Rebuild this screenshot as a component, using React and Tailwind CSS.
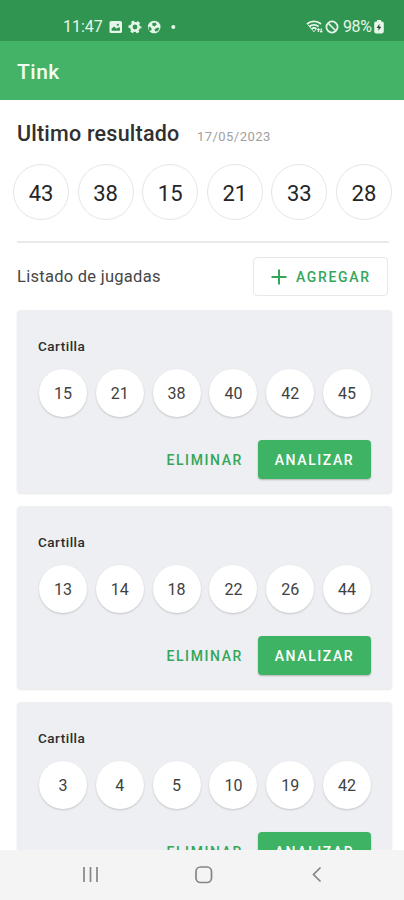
const RESULT = [43, 38, 15, 21, 33, 28];

const TICKETS = [
  { id: 1, numbers: [15, 21, 38, 40, 42, 45] },
  { id: 2, numbers: [13, 14, 18, 22, 26, 44] },
  { id: 3, numbers: [3, 4, 5, 10, 19, 42] },
];

// ─── Status bar ───────────────────────────────────────────────────
function NotificationIcons() {
  return (
    <svg className="ml-[6px]" width="68" height="14" viewBox="0 0 68 14" fill="currentColor">
      {/* picture */}
      <rect x=".5" y="1" width="12.5" height="12" rx="1.6" />
      <path d="M2.6 10.8V8.6L5.2 6.6L7.2 8.6L10.9 7V10.8Z" fill="#319552" />
      <circle cx="8.8" cy="4.8" r="1.1" fill="#319552" />
      {/* gear */}
      <circle cx="26" cy="7" r="3.7" fill="none" stroke="currentColor" strokeWidth="2.6" />
      <circle cx="26" cy="7" r="5.4" fill="none" stroke="currentColor" strokeWidth="2.2" strokeDasharray="2.8 2.855" strokeDashoffset="1.4" />
      {/* ball */}
      <circle cx="45.2" cy="7" r="6.3" />
      <path d="M43.2 3.2L46.4 2.4L47.8 4.6L45.6 6.4L43.4 5.6Z" fill="#319552" />
      <path d="M39.6 6.6L42 7.4L42.8 9.8L41 11.2L39.8 9.4Z" fill="#319552" />
      <path d="M46.4 8.4L49.2 7.4L50.4 8.6L48.6 11.2L46.6 11.4L45.4 10Z" fill="#319552" />
      <circle cx="64.3" cy="7" r="2" />
    </svg>
  );
}

function StatusBar() {
  return (
    <div className="h-[41px] shrink-0 bg-[#319552] text-[#e6f7e9] flex justify-between pt-[17px] pl-[63px] pr-[20px]">
      <div className="flex items-center h-5">
        <span className="w-[40px] text-[16px] leading-5">11:47</span>
        <NotificationIcons />
      </div>
      <div className="flex items-center h-5">
        <svg width="18" height="14" viewBox="0 0 18 14" fill="none" stroke="currentColor" strokeWidth="1.8">
          <path d="M1 4C5 .6 11 .6 15 4" />
          <path d="M3.4 6.5C6 4.3 10 4.3 12.6 6.5" />
          <path d="M5.6 8.9C7 7.7 9 7.7 10.4 8.9" />
          <path d="M1.8 4.6L8 11.8L10.2 9.1" strokeWidth=".9" />
          <path d="M12.4 12V8.6M15.2 8.4V12.2" strokeWidth="1.3" />
          <path d="M11 10L12.4 8.4L13.8 10M13.8 10.8L15.2 12.4L16.6 10.8" strokeWidth="1" />
        </svg>
        <svg className="ml-px" width="14" height="14" viewBox="0 0 14 14" fill="none" stroke="currentColor" strokeWidth="1.7">
          <circle cx="7" cy="7" r="5.6" />
          <path d="M3 3L11 11" />
        </svg>
        <span className="ml-[4px] w-[31px] text-[16px] leading-5 tracking-[-0.4px] whitespace-nowrap">98%</span>
        <svg width="10" height="14" viewBox="0 0 10 14">
          <path d="M3 0H7V1.6H8A1.8 1.8 0 0 1 9.8 3.4V11.6A1.8 1.8 0 0 1 8 13.4H2A1.8 1.8 0 0 1 .2 11.6V3.4A1.8 1.8 0 0 1 2 1.6H3Z" fill="currentColor" />
          <path d="M5.6 3.8L2.6 8H4.7L4.2 11L7.3 6.8H5.2Z" fill="#23442f" />
        </svg>
      </div>
    </div>
  );
}

// ─── Ticket card ──────────────────────────────────────────────────
function TicketCard({ numbers }) {
  return (
    <div className="h-[183px] shrink-0 rounded-[4px] bg-[#edeff2] shadow-[0_1px_2px_rgba(0,0,0,0.1)] pt-[26px] px-[21px]">
      <h3 className="text-[13.5px] leading-5 font-medium tracking-[0.5px] text-[#2b2c2e]">Cartilla</h3>
      <div className="mt-[13px] ml-[1px] flex justify-between">
        {numbers.map((n) => (
          <span
            key={n}
            className="w-12 h-12 rounded-full bg-white shadow-[0_1px_2px_rgba(0,0,0,0.18)] flex items-center justify-center pt-[2px] text-[16px] text-[#414141]"
          >
            {n}
          </span>
        ))}
      </div>
      <div className="mt-[23px] flex justify-end">
        <button className="h-[39px] pt-[2px] pr-[15px] text-[14px] font-medium tracking-[1.6px] text-[#34a65a]">ELIMINAR</button>
        <button className="w-[113px] h-[39px] pt-[2px] rounded-[4px] bg-[#3fb364] shadow-[0_1px_2px_rgba(0,0,0,0.25)] text-[14px] font-medium tracking-[1.6px] text-white">
          ANALIZAR
        </button>
      </div>
    </div>
  );
}

function NavBar() {
  return (
    <div className="h-[50px] shrink-0 bg-[#f4f4f4]">
      <svg width="404" height="50" viewBox="0 0 404 50" fill="none" stroke="#858585" strokeWidth="1.7">
        <path d="M84 17V32M90.5 17V32M97 17V32" />
        <rect x="196" y="17" width="15.5" height="15.5" rx="4.5" />
        <path d="M320.5 17.5L313.5 24.5L320.5 31.5" />
      </svg>
    </div>
  );
}

export default function App() {
  return (
    <div className="w-[404px] h-[900px] overflow-hidden flex flex-col bg-white font-[Roboto,sans-serif]">
      <StatusBar />
      <header className="h-[59px] shrink-0 bg-[#43b368] flex items-center pl-[17px] pt-[4px]">
        <h1 className="text-[21px] font-medium tracking-[0.5px] text-[#f3fff3]">Tink</h1>
      </header>

      <main className="flex-1 min-h-0 overflow-hidden flex flex-col">
        <div className="pt-[20px] pl-[17px] flex items-baseline">
          <h2 className="w-[180px] text-[21.5px] leading-7 font-medium tracking-[0.22px] text-[#303030] whitespace-nowrap">Ultimo resultado</h2>
          <span className="text-[13px] tracking-[0.45px] text-[#a0a0a0]">17/05/2023</span>
        </div>
        <div className="mt-[16px] pl-[13px] pr-[12px] flex justify-between">
          {RESULT.map((n) => (
            <span
              key={n}
              className="w-14 h-14 rounded-full border border-[#e5e5e5] flex items-center justify-center pt-[2px] text-[22px] text-[#252525]"
            >
              {n}
            </span>
          ))}
        </div>

        <div className="mt-[21px] ml-[17px] mr-[15px] h-[2px] shrink-0 bg-[#e9e9e9]" />

        <div className="mt-[14px] pl-[17px] pr-[16px] flex items-center justify-between">
          <span className="pt-px text-[16.5px] tracking-[0.27px] text-[#464646]">Listado de jugadas</span>
          <button className="w-[135px] h-[39px] rounded-[4px] border-[1.5px] border-[#e8e8e8] flex items-center pl-[17px] text-[#34a65a]">
            <svg width="16" height="16" viewBox="0 0 16 16" stroke="currentColor" strokeWidth="2">
              <path d="M8 .5V15.5M.5 8H15.5" />
            </svg>
            <span className="ml-[9px] pt-px text-[14px] font-medium tracking-[1.65px]">AGREGAR</span>
          </button>
        </div>

        <div className="mt-[14px] pl-[17px] pr-[12px] flex flex-col gap-[13px]">
          {TICKETS.map((t) => (
            <TicketCard key={t.id} numbers={t.numbers} />
          ))}
        </div>
      </main>

      <NavBar />
    </div>
  );
}
